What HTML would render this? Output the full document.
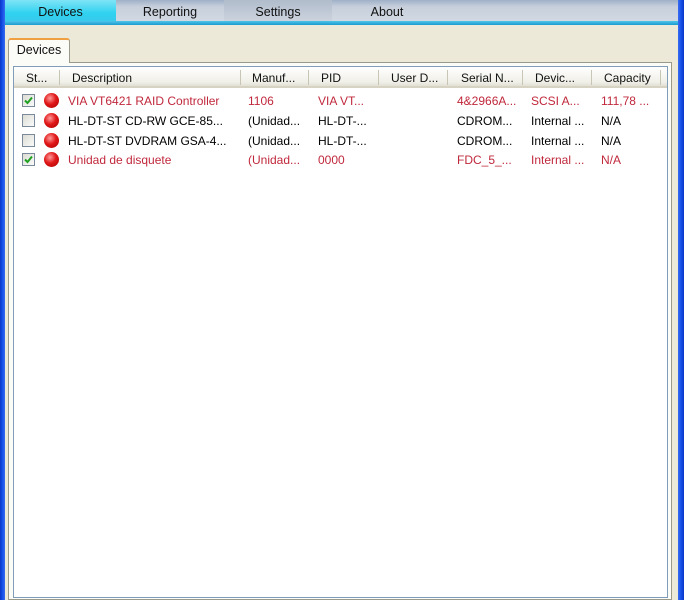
<!DOCTYPE html>
<html><head><meta charset="utf-8"><style>
*{margin:0;padding:0;box-sizing:border-box}
body{width:684px;height:600px;overflow:hidden;background:#ece9d8;font-family:"Liberation Sans",sans-serif;font-size:12px;position:relative}
.lb{position:absolute;left:0;top:0;width:5px;height:600px;background:linear-gradient(90deg,#0a36c8,#1650e8,#3a6cf0)}
.rb{position:absolute;right:0;top:0;width:6px;height:600px;background:linear-gradient(90deg,#3a6cf0,#1650e8,#0a36c8)}
.bar{position:absolute;left:5px;top:0;width:673px;height:22px;background:linear-gradient(#9fb0c8,#c6cfdb 30%,#d2d9e3)}
.line{position:absolute;left:5px;top:21px;width:673px;height:4px;background:linear-gradient(#4fc4e8,#1a9bd0)}
.t{position:absolute;top:0;height:22px;line-height:24px;text-align:center;color:#111;font-size:12.5px}
.act{background:linear-gradient(#7fe4f6,#2fd2f0 60%,#38c8ec)}
.it{position:absolute;left:8px;top:38px;width:62px;height:25px;background:#fbfbf8;border:1px solid #9a9a8a;border-bottom:none;border-top:2px solid #f0a040;border-radius:3px 3px 0 0;text-align:center;line-height:21px;font-size:12.5px;color:#111;z-index:2}
.panel{position:absolute;left:8px;top:62px;width:664px;height:538px;background:#fbfbf8;border:1px solid #9a9a8a}
.lv{position:absolute;left:13px;top:66px;width:655px;height:532px;background:#fff;border:1px solid #7f9db9}
.hd{position:absolute;left:0;top:0;width:653px;height:21px;background:linear-gradient(#fff,#f0efe8 80%,#e2e0d4);border-bottom:2px solid #d6d3c2}
.hc{position:absolute;top:0;height:21px;line-height:22px;color:#111;font-size:12px;white-space:nowrap}
.sep{position:absolute;top:3px;width:1px;height:15px;background:#c8c5b4}
.r{position:absolute;left:0;width:653px;height:20px;line-height:20px;white-space:nowrap}
.r span{position:absolute;top:0}
.red{color:#c0283c}
.cb{position:absolute;left:8px;top:3px;width:13px;height:13px;border:1px solid #7a8a9c;background:linear-gradient(135deg,#dcdcd4,#fafafa)}
.dot{position:absolute;left:30px;top:2px;width:15px;height:15px;border-radius:50%;background:radial-gradient(circle at 40% 35%,#ff9a9a,#e01818 45%,#a00 100%)}
</style></head><body>
<div class="lb"></div><div class="rb"></div>
<div class="bar"></div>
<div class="t act" style="left:5px;width:111px">Devices</div>
<div class="t" style="left:116px;width:108px">Reporting</div>
<div class="t" style="left:224px;width:108px;background:linear-gradient(#b0bccb,#cdd4df)">Settings</div>
<div class="t" style="left:332px;width:110px">About</div>
<div class="line"></div>
<div class="panel"></div>
<div class="it">Devices</div>
<div class="lv">
<div class="hd">
<div class="hc" style="left:12px">St...</div><div class="sep" style="left:45px"></div>
<div class="hc" style="left:58px">Description</div><div class="sep" style="left:226px"></div>
<div class="hc" style="left:238px">Manuf...</div><div class="sep" style="left:294px"></div>
<div class="hc" style="left:307px">PID</div><div class="sep" style="left:364px"></div>
<div class="hc" style="left:377px">User D...</div><div class="sep" style="left:433px"></div>
<div class="hc" style="left:447px">Serial N...</div><div class="sep" style="left:508px"></div>
<div class="hc" style="left:521px">Devic...</div><div class="sep" style="left:577px"></div>
<div class="hc" style="left:590px">Capacity</div><div class="sep" style="left:646px"></div>
</div>
<div class="r red" style="top:24px"><div class="cb"><svg width="11" height="11" style="position:absolute;left:0;top:0"><path d="M2 5.5L4.5 8L9 2.5" stroke="#21a121" stroke-width="2" fill="none"/></svg></div><div class="dot"></div>
<span style="left:54px">VIA VT6421 RAID Controller</span><span style="left:234px">1106</span><span style="left:304px">VIA VT...</span><span style="left:443px">4&amp;2966A...</span><span style="left:517px">SCSI A...</span><span style="left:587px">111,78 ...</span></div>
<div class="r" style="top:44px"><div class="cb"></div><div class="dot"></div>
<span style="left:54px">HL-DT-ST CD-RW GCE-85...</span><span style="left:234px">(Unidad...</span><span style="left:304px">HL-DT-...</span><span style="left:443px">CDROM...</span><span style="left:517px">Internal ...</span><span style="left:587px">N/A</span></div>
<div class="r" style="top:64px"><div class="cb"></div><div class="dot"></div>
<span style="left:54px">HL-DT-ST DVDRAM GSA-4...</span><span style="left:234px">(Unidad...</span><span style="left:304px">HL-DT-...</span><span style="left:443px">CDROM...</span><span style="left:517px">Internal ...</span><span style="left:587px">N/A</span></div>
<div class="r red" style="top:83px"><div class="cb"><svg width="11" height="11" style="position:absolute;left:0;top:0"><path d="M2 5.5L4.5 8L9 2.5" stroke="#21a121" stroke-width="2" fill="none"/></svg></div><div class="dot"></div>
<span style="left:54px">Unidad de disquete</span><span style="left:234px">(Unidad...</span><span style="left:304px">0000</span><span style="left:443px">FDC_5_...</span><span style="left:517px">Internal ...</span><span style="left:587px">N/A</span></div>
</div>
</body></html>
